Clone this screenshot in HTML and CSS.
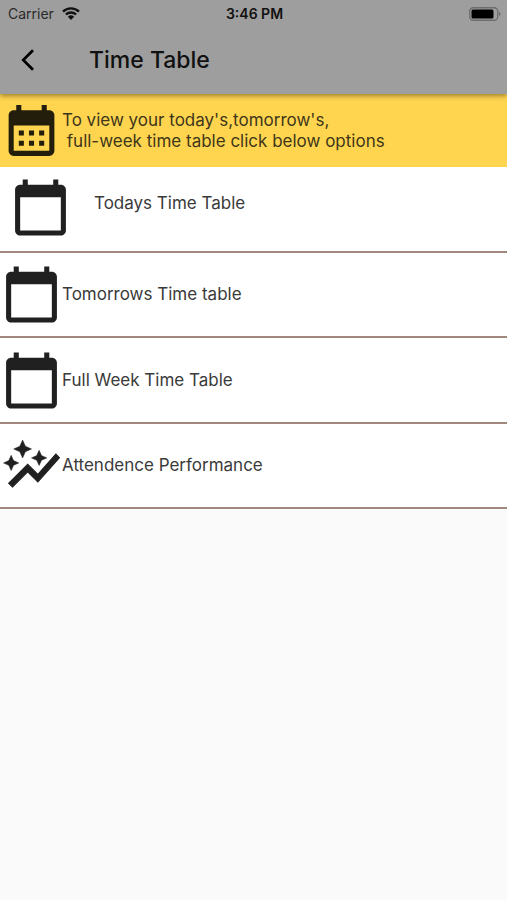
FILE: index.html
```html
<!DOCTYPE html>
<html lang="en">
<head>
    <meta charset="UTF-8">
    <meta name="viewport" content="width=device-width, initial-scale=1.0">
    <title>Time Table</title>
    <link rel="stylesheet" href="styles.css">
</head>
<body>
    <svg class="icon-defs" aria-hidden="true">
        <symbol id="calendar" viewBox="0 0 24 24">
            <path d="M20 3h-1V1h-2v2H7V1H5v2H4c-1.1 0-2 .9-2 2v16c0 1.1.9 2 2 2h16c1.1 0 2-.9 2-2V5c0-1.1-.9-2-2-2zm0 18H4V8h16v13z"/>
        </symbol>
    </svg>

    <header class="app-header">
        <div class="status-bar">
            <div class="carrier">
                <span>Carrier</span>
                <svg class="wifi" viewBox="0 0 18 13">
                    <path d="M1 4.6a11.5 11.5 0 0 1 16 0M3.9 7.5a7.4 7.4 0 0 1 10.2 0" fill="none" stroke="#111" stroke-width="2.4"/>
                    <path d="M9 13L5.9 9.7a4.6 4.6 0 0 1 6.2 0z" fill="#111"/>
                </svg>
            </div>
            <span class="clock">3:46 PM</span>
            <div class="battery-box">
                <svg class="battery" viewBox="0 0 32 14">
                    <rect x="0.75" y="0.75" width="28" height="12.5" rx="3.5" fill="none" stroke="#6c6c6c" stroke-width="1.3"/>
                    <rect x="2.5" y="2.5" width="22" height="9" rx="1.5" fill="#000"/>
                    <path d="M30 4.8c2 .8 2 3.6 0 4.4z" fill="#6c6c6c"/>
                </svg>
            </div>
        </div>
        <div class="title-bar">
            <button type="button" class="back" aria-label="Back">
                <svg viewBox="0 0 24 24"><path d="M17.51 3.87L15.73 2.1 5.84 12l9.9 9.9 1.77-1.77L9.38 12z"/></svg>
            </button>
            <h1>Time Table</h1>
        </div>
    </header>

    <main>
        <div class="banner">
            <svg class="icon" viewBox="0 0 24 24">
                <path d="M19 4h-1V2h-2v2H8V2H6v2H5c-1.11 0-1.99.9-1.99 2L3 20c0 1.1.89 2 2 2h14c1.1 0 2-.9 2-2V6c0-1.1-.9-2-2-2zm0 16H5V10h14v10zM9 14H7v-2h2v2zm4 0h-2v-2h2v2zm4 0h-2v-2h2v2zm-8 4H7v-2h2v2zm4 0h-2v-2h2v2zm4 0h-2v-2h2v2z"/>
            </svg>
            <p>To view your today's,tomorrow's,<br>&nbsp;full-week time table click below options</p>
        </div>
        <nav class="options">
            <a href="#today" class="option option-tile">
                <svg class="icon"><use href="#calendar"/></svg>
                <span>Todays Time Table</span>
            </a>
            <a href="#tomorrow" class="option">
                <svg class="icon"><use href="#calendar"/></svg>
                <span>Tomorrows Time table</span>
            </a>
            <a href="#week" class="option">
                <svg class="icon"><use href="#calendar"/></svg>
                <span>Full Week Time Table</span>
            </a>
            <a href="#attendence" class="option">
                <svg class="icon" viewBox="0 0 24 24">
                    <path d="M14.06 9.94L12 9l2.06-.94L15 6l.94 2.06L18 9l-2.06.94L15 12l-.94-2.06zM4 14l.94-2.06L7 11l-2.06-.94L4 8l-.94 2.06L1 11l2.06.94L4 14zm4.5-5l1.09-2.41L12 5.5 9.59 4.41 8.5 2 7.41 4.41 5 5.5l2.41 1.09L8.5 9z" stroke="#202020" stroke-width="0.2"/>
                    <path d="M4.5 20.5l6-6.01 4 4L23 8.93l-1.41-1.41-7.09 7.97-4-4L3 19z" stroke="#202020" stroke-width="0.4"/>
                </svg>
                <span>Attendence Performance</span>
            </a>
        </nav>
    </main>
</body>
</html>
```

FILE: styles.css
```css
* {
    box-sizing: border-box;
}

body {
    margin: 0;
    background-color: #fafafa;
    color: #3a3a3a;
    font-family: Inter, Roboto, sans-serif;
    font-size: 17px;
    line-height: 21px;
}

.icon-defs {
    display: none;
}

.app-header {
    position: relative;
    background-color: #9e9e9e;
    color: #111;
    box-shadow: 0 2px 5px rgba(0, 0, 0, 0.4);
}

.status-bar {
    display: grid;
    grid-template-columns: 1fr auto 1fr;
    align-items: center;
    height: 27px;
    padding: 0 6px 0 8px;
    font-size: 14px;
}

.carrier {
    display: flex;
    align-items: center;
    gap: 8px;
    color: #2a2a2a;
}

.wifi {
    width: 18px;
    height: 13px;
}

.clock {
    font-weight: 600;
}

.battery-box {
    display: flex;
    justify-content: flex-end;
}

.battery {
    width: 32px;
    height: 14px;
}

.title-bar {
    display: flex;
    align-items: center;
    height: 67px;
    padding: 0 12px 2px;
}

.back {
    display: flex;
    width: 32px;
    margin-right: 45px;
    padding: 0 3px;
    border: none;
    background: none;
    cursor: pointer;
}

.back svg {
    width: 26px;
    height: 26px;
}

.title-bar h1 {
    margin: 0;
    font-size: 23px;
    font-weight: 500;
    line-height: 28px;
}

.banner {
    display: flex;
    align-items: center;
    height: 73px;
    padding: 0 1px;
    background-color: #ffd54f;
    color: #40361a;
}

.banner p {
    margin: 0;
}

.icon {
    flex: none;
    width: 61px;
    height: 61px;
    fill: #202020;
}

.banner .icon {
    fill: #231d0b;
}

.option {
    display: flex;
    align-items: center;
    min-height: 85px;
    padding: 0 1px;
    border-bottom: 2px solid #a1887f;
    background-color: #fff;
    color: inherit;
    text-decoration: none;
}

.option:nth-child(odd) {
    min-height: 86px;
}

.option-tile {
    align-items: flex-start;
    gap: 23px;
    padding: 10px;
}

.option-tile span {
    padding-top: 16px;
}
```
